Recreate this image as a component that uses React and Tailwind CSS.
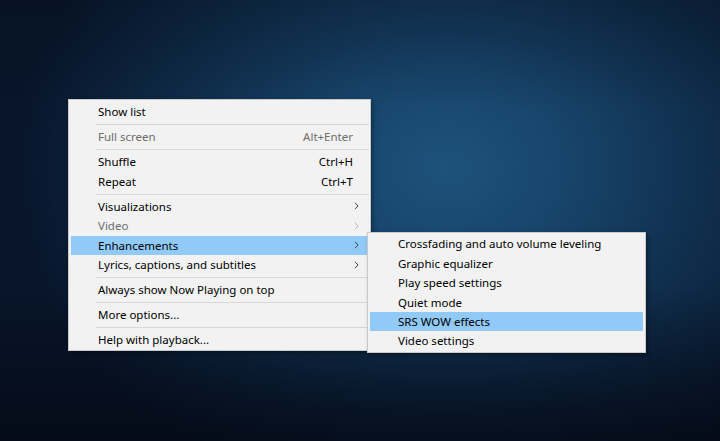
import React from "react";

const Chevron = ({ light }) => (
  <svg width="5" height="8" viewBox="0 0 5 8" className="shrink-0">
    <path d="M1 0.8 L4 4 L1 7.2" fill="none" stroke={light ? "#b5b5b5" : "#444"} strokeWidth="1" />
  </svg>
);

const Sep = () => <div className="ml-[27px] mr-[1px] mt-[2.5px] mb-[2px] h-px bg-[#d7d7d7]" />;

const Item = ({ label, shortcut, sub, disabled, active }) => (
  <div
    className={`flex h-[19.5px] items-center mx-[2px] pl-[27px] pr-[15px] ${active ? "bg-[#91c9f7]" : ""}`}
  >
    <span className={`flex-1 ${disabled ? "text-[#6d6d6d]" : "text-black"}`}>{label}</span>
    {shortcut && <span className={disabled ? "text-[#6d6d6d]" : "text-black"}>{shortcut}</span>}
    {sub && (
      <span className="mr-[-6px]">
        <Chevron light={disabled} />
      </span>
    )}
  </div>
);

const SubItem = ({ label, active }) => (
  <div className={`flex h-[19.4px] items-center mx-[2px] pl-[28px] ${active ? "bg-[#91c9f7]" : ""}`}>
    <span className="text-black">{label}</span>
  </div>
);

export default function App() {
  return (
    <div
      className="relative w-[720px] h-[441px] overflow-hidden bg-[linear-gradient(to_bottom,rgba(4,10,22,0.25)_0%,transparent_25%,transparent_65%,rgba(3,7,18,0.75)_100%),radial-gradient(ellipse_60%_80%_at_62%_38%,#1e527b_0%,#174369_30%,#0f2d4b_62%,#08152a_100%)]"
      style={{ fontFamily: '"Noto Sans", "Open Sans", sans-serif' }}
    >
      <div className="absolute left-[68px] top-[99px] w-[303px] bg-[#f2f2f2] border border-[#c9c9c9] pt-[2px] text-[11.5px] leading-none shadow-[2px_2px_4px_rgba(0,0,0,0.35)]">
        <Item label="Show list" />
        <Sep />
        <Item label="Full screen" shortcut="Alt+Enter" disabled />
        <Sep />
        <Item label="Shuffle" shortcut="Ctrl+H" />
        <Item label="Repeat" shortcut="Ctrl+T" />
        <Sep />
        <Item label="Visualizations" sub />
        <Item label="Video" sub disabled />
        <Item label="Enhancements" sub active />
        <Item label="Lyrics, captions, and subtitles" sub />
        <Sep />
        <Item label="Always show Now Playing on top" />
        <Sep />
        <Item label="More options..." />
        <Sep />
        <Item label="Help with playback..." />
      </div>

      <div className="absolute left-[367px] top-[232px] w-[279px] bg-[#f2f2f2] border border-[#c9c9c9] pt-[1.5px] pb-[1px] text-[11.5px] leading-none shadow-[2px_2px_4px_rgba(0,0,0,0.35)]">
        <SubItem label="Crossfading and auto volume leveling" />
        <SubItem label="Graphic equalizer" />
        <SubItem label="Play speed settings" />
        <SubItem label="Quiet mode" />
        <SubItem label="SRS WOW effects" active />
        <SubItem label="Video settings" />
      </div>
    </div>
  );
}
